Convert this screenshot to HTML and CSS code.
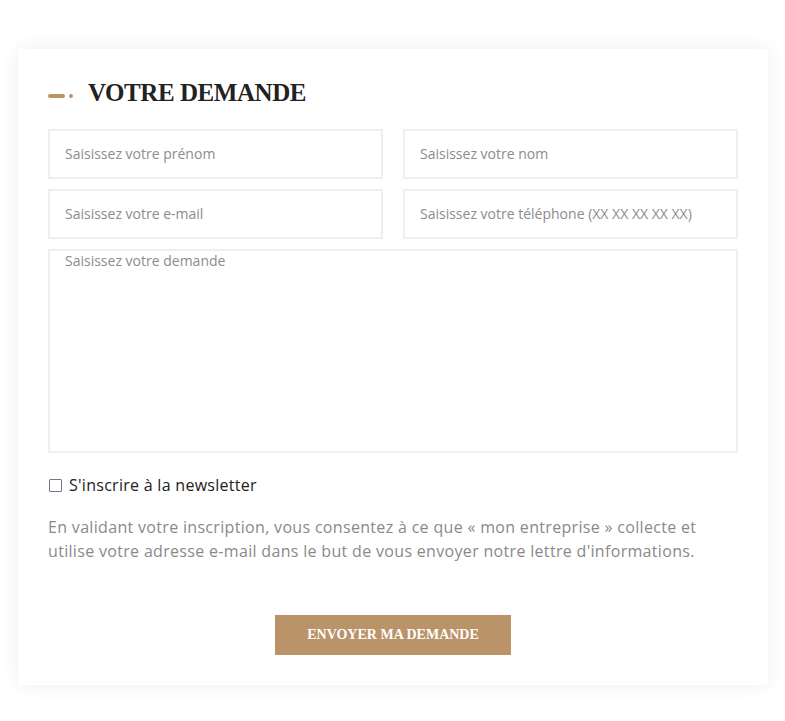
FILE: index.html
```html
<!DOCTYPE html>
<html lang="fr">
<head>
<meta charset="utf-8">
<title>Votre demande</title>
<link rel="stylesheet" href="styles.css">
</head>
<body>
<div class="page">
  <form class="card">
    <h2 class="title"><span class="dash"><span class="bar"></span><span class="dot"></span></span>VOTRE DEMANDE</h2>
    <div class="grid">
      <input class="field" type="text" placeholder="Saisissez votre prénom">
      <input class="field" type="text" placeholder="Saisissez votre nom">
      <input class="field" type="email" placeholder="Saisissez votre e-mail">
      <input class="field" type="tel" placeholder="Saisissez votre téléphone (XX XX XX XX XX)">
      <textarea class="field area" placeholder="Saisissez votre demande"></textarea>
    </div>
    <label class="check"><input type="checkbox" class="box">S'inscrire à la newsletter</label>
    <p class="legal">En validant votre inscription, vous consentez à ce que « mon entreprise » collecte et utilise votre adresse e-mail dans le but de vous envoyer notre lettre d'informations.</p>
    <div class="actions"><button type="button" class="submit">ENVOYER MA DEMANDE</button></div>
  </form>
</div>
</body>
</html>
```
FILE: styles.css
```css
html, body {
  margin: 0;
  padding: 0;
  background: #ffffff;
}
.page {
  padding: 49px 17px 36px 18px;
}
.card {
  width: 750px;
  box-sizing: border-box;
  background: #fff;
  padding: 30px 30px 30px 30px;
  box-shadow: 0 0 18px rgba(0, 0, 0, 0.07);
  font-family: "Open Sans", sans-serif;
}
.title {
  margin: 1px 0 23px 0;
  display: flex;
  align-items: center;
  height: 26px;
  font-family: "Liberation Serif", "Times New Roman", serif;
  font-weight: bold;
  font-size: 25px;
  letter-spacing: -0.45px;
  color: #222;
  line-height: 26px;
}
.dash {
  display: flex;
  align-items: center;
  gap: 4px;
  width: 25px;
  margin-right: 15px;
  margin-top: 5px;
}
.bar {
  width: 18px;
  height: 4px;
  border-radius: 2px;
  background: #bb9368;
}
.dot {
  width: 4px;
  height: 4px;
  border-radius: 50%;
  background: #bb9368;
}
.grid {
  display: grid;
  grid-template-columns: 1fr 1fr;
  column-gap: 20px;
  row-gap: 10px;
}
.field {
  box-sizing: border-box;
  height: 50px;
  border: 2px solid #efefef;
  background: #fff;
  padding: 0 15px 1px 15px;
  font-family: "Open Sans", sans-serif;
  font-size: 14px;
  color: #333;
  outline: none;
  margin: 0;
}
.field::placeholder {
  color: #8c8c8c;
}
.area {
  grid-column: 1 / 3;
  height: 204px;
  padding: 0 15px;
  resize: none;
  line-height: 20px;
}
.check {
  display: flex;
  align-items: center;
  margin-top: 20px;
  font-size: 16px;
  line-height: 24px;
  letter-spacing: 0.28px;
  color: #222;
}
.box {
  appearance: none;
  -webkit-appearance: none;
  width: 13px;
  height: 13px;
  margin: 0 7px 0 1px;
  border: 1.5px solid #75748a;
  border-radius: 1px;
  box-sizing: border-box;
  background: #fff;
}
.legal {
  margin: 18px 0 0 0;
  font-size: 16px;
  line-height: 24px;
  letter-spacing: 0.32px;
  color: #8a8a8a;
}
.actions {
  display: flex;
  justify-content: center;
  margin-top: 52px;
}
.submit {
  width: 236px;
  height: 40px;
  border: none;
  background: #bb9368;
  color: #fff;
  font-family: "Liberation Serif", "Times New Roman", serif;
  font-weight: bold;
  font-size: 14px;
  padding: 0;
  cursor: pointer;
}
```
